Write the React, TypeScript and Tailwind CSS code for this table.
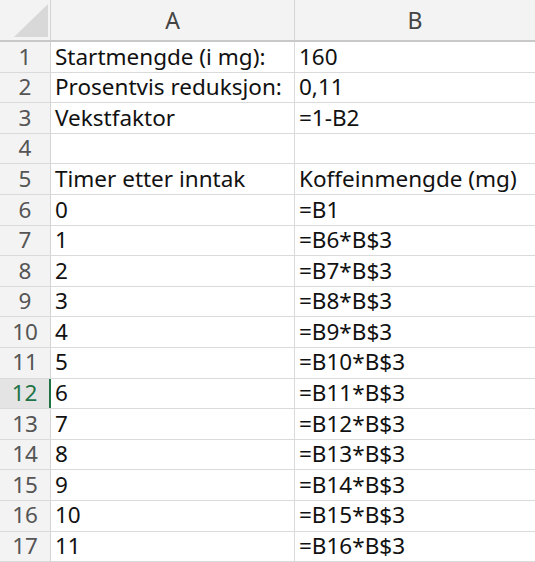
import React from "react";

const rows: [string, string][] = [
  ["Startmengde (i mg):", "160"],
  ["Prosentvis reduksjon:", "0,11"],
  ["Vekstfaktor", "=1-B2"],
  ["", ""],
  ["Timer etter inntak", "Koffeinmengde (mg)"],
  ["0", "=B1"],
  ["1", "=B6*B$3"],
  ["2", "=B7*B$3"],
  ["3", "=B8*B$3"],
  ["4", "=B9*B$3"],
  ["5", "=B10*B$3"],
  ["6", "=B11*B$3"],
  ["7", "=B12*B$3"],
  ["8", "=B13*B$3"],
  ["9", "=B14*B$3"],
  ["10", "=B15*B$3"],
  ["11", "=B16*B$3"],
];

export default function App() {
  return (
    <div
      className="w-[535px] h-[562px] overflow-hidden bg-white text-[#111]"
      style={{ fontFamily: '"Noto Sans", "Open Sans", sans-serif' }}
    >
      {/* column header */}
      <div className="flex h-[42px] bg-[#f3f3f3] border-b-2 border-[#c8c8c8]">
        <div className="relative w-[51px] shrink-0 border-r border-[#d4d4d4]">
          <svg className="absolute inset-0" width="51" height="40" viewBox="0 0 51 40">
            <polygon points="14,37 48,37 48,4" fill="#d8d8d8" />
          </svg>
        </div>
        <div className="w-[244px] shrink-0 flex items-center justify-center border-r border-[#d4d4d4] text-[23px] text-[#444]">
          A
        </div>
        <div className="flex-1 flex items-center justify-center text-[23px] text-[#444]">B</div>
      </div>

      {rows.map(([a, b], i) => {
        const active = i === 11;
        return (
          <div key={i} className="flex h-[30.6px] border-b border-[#dadada] text-[22.5px] leading-none">
            <div
              className={
                active
                  ? "w-[51px] shrink-0 flex items-center justify-center bg-[#e4e4e4] text-[#217346] border-r-2 border-[#217346]"
                  : "w-[51px] shrink-0 flex items-center justify-center bg-[#f3f3f3] text-[#555] border-r border-[#d4d4d4]"
              }
            >
              {i + 1}
            </div>
            <div className="w-[244px] shrink-0 flex items-center pl-[4px] border-r border-[#dadada] whitespace-nowrap overflow-hidden">
              {a}
            </div>
            <div className="flex-1 flex items-center pl-[4px] whitespace-nowrap overflow-hidden">{b}</div>
          </div>
        );
      })}
    </div>
  );
}
